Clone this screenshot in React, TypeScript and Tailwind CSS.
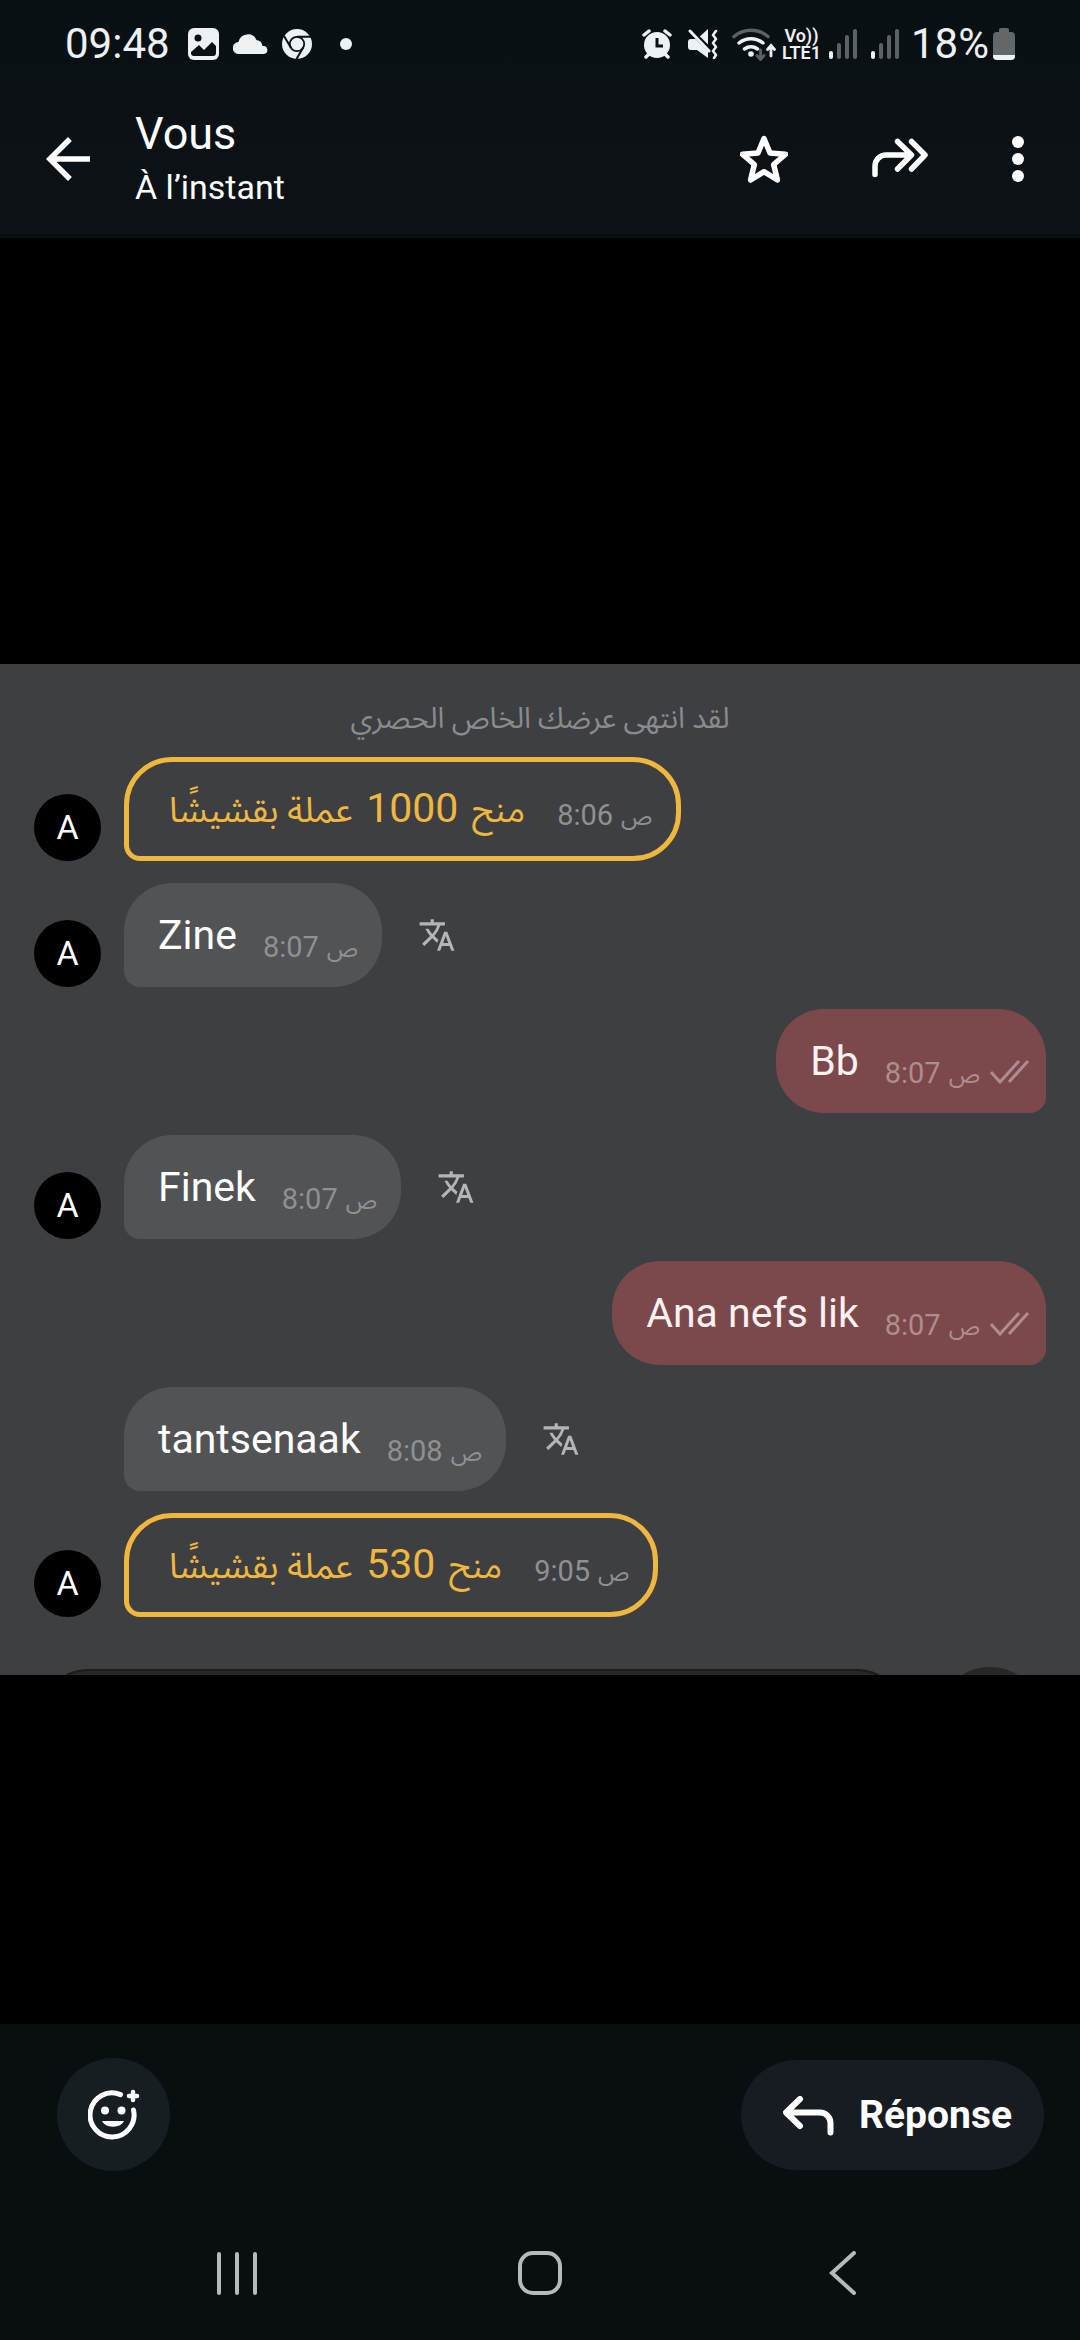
import { MdArrowBack, MdTranslate } from "react-icons/md";
import clsx from "clsx";

type Message = {
  id: number;
  kind: "tip" | "received" | "sent";
  text?: string;
  amount?: number;
  time: string;
  avatar?: boolean;
};

const messages: Message[] = [
  { id: 1, kind: "tip", amount: 1000, time: "8:06", avatar: true },
  { id: 2, kind: "received", text: "Zine", time: "8:07", avatar: true },
  { id: 3, kind: "sent", text: "Bb", time: "8:07" },
  { id: 4, kind: "received", text: "Finek", time: "8:07", avatar: true },
  { id: 5, kind: "sent", text: "Ana nefs lik", time: "8:07" },
  { id: 6, kind: "received", text: "tantsenaak", time: "8:08" },
  { id: 7, kind: "tip", amount: 530, time: "9:05", avatar: true },
];

function SignalBars() {
  return (
    <svg width="28" height="32" viewBox="0 0 28 32" strokeWidth="4" strokeLinecap="round">
      <path d="M2 25v4" stroke="#eef1f3" />
      <path d="M10 17v12M18 9v20M26 3v26" stroke="#5d6164" />
    </svg>
  );
}

function StatusBar() {
  return (
    <div className="flex h-[88px] items-center px-[65px] text-[#eef1f3]">
      <span className="text-[42px] leading-[48px]">09:48</span>
      <div className="ml-[18px] flex items-center gap-[14px]">
        <svg width="31" height="32" viewBox="0 0 31 32">
          <rect width="31" height="32" rx="6" fill="currentColor" />
          <circle cx="10" cy="10" r="3.5" fill="#0a1014" />
          <path d="M3 24l8-7 5 5 8-8 4 4v7a3 3 0 0 1-3 3H6a3 3 0 0 1-3-3z" fill="#0a1014" />
        </svg>
        <svg width="35" height="22" viewBox="0 0 35 22">
          <path
            d="M6 21a6 6 0 0 1-.5-12 9.500 9.500 0 0 1 18-2A7 7 0 0 1 29.500 13 4 4 0 0 1 31 21z"
            fill="currentColor"
          />
        </svg>
        <svg width="30" height="30" viewBox="0 0 30 30">
          <circle cx="15" cy="15" r="15" fill="currentColor" />
          <circle cx="15" cy="15" r="7.200" fill="none" stroke="#0a1014" strokeWidth="1.800" />
          <path
            d="M15 7.800H29M8.800 18.600L2 7M21.200 18.600L14.500 30"
            stroke="#0a1014"
            strokeWidth="2"
            fill="none"
          />
        </svg>
      </div>
      <span className="ml-7 size-3 rounded-full bg-current" />

      <div className="ml-auto flex items-center">
        <svg width="30" height="30" viewBox="0 0 30 30" fill="currentColor">
          <circle cx="15" cy="16" r="13" />
          <path
            d="M2 6l5-4M28 6l-5-4M7 25l-3 3M23 25l3 3"
            stroke="currentColor"
            strokeWidth="3.500"
            strokeLinecap="round"
          />
          <path d="M15 9v8h6" stroke="#0a1014" strokeWidth="3" fill="none" />
        </svg>
        <svg className="ml-4" width="30" height="30" viewBox="0 0 30 30" fill="currentColor">
          <path d="M0 13q0-3 3-3h6l11-10v29L9 21H3q-3 0-3-3z" />
          <path d="M3 2l19 19" stroke="#0a1014" strokeWidth="5" />
          <path d="M2 2l19 20" stroke="currentColor" strokeWidth="3" strokeLinecap="round" />
          <path
            d="M28 2l-3 4 3 4-3 4 3 4-3 4 3 4-2 3"
            fill="none"
            stroke="currentColor"
            strokeWidth="2.500"
            strokeLinecap="round"
            strokeLinejoin="round"
          />
        </svg>
        <svg className="ml-[14px]" width="44" height="34" viewBox="0 0 44 34" fill="none" strokeLinecap="round">
          <path d="M2 9.500a26 26 0 0 1 34 0" stroke="#5d6164" strokeWidth="3.500" />
          <path d="M7 16a19 19 0 0 1 24 0M12.500 22a11 11 0 0 1 13 0" stroke="#eef1f3" strokeWidth="3.500" />
          <circle cx="19" cy="27" r="2.800" fill="#eef1f3" />
          <path d="M28.500 23v9M25 28.500l3.500 4 3.500-4" stroke="#5d6164" strokeWidth="2.800" />
          <path d="M39 29v-10M35.500 22.500l3.500-4 3.500 4" stroke="#eef1f3" strokeWidth="2.800" />
        </svg>
        <div className="ml-[6px] flex flex-col items-center text-[18px] font-semibold leading-[17px]">
          <span>Vo))</span>
          <span>LTE1</span>
        </div>
        <div className="ml-2 flex gap-[14px]">
          <SignalBars />
          <SignalBars />
        </div>
        <span className="ml-3 text-[42px] leading-[48px]">18%</span>
        <svg className="ml-1" width="22" height="32" viewBox="0 0 22 32">
          <path
            d="M6 4V2q0-2 2-2h6q2 0 2 2v2h2q4 0 4 4v20q0 4-4 4H4q-4 0-4-4V8q0-4 4-4z"
            fill="#63676a"
          />
          <path d="M0 27h22v1q0 4-4 4H4q-4 0-4-4z" fill="#eef1f3" />
        </svg>
      </div>
    </div>
  );
}

function Topbar() {
  return (
    <header className="border-b-4 border-[#0a0f12] bg-linear-to-b from-[#091014] to-[#0d1216] pb-1">
      <StatusBar />
      <div className="flex h-[142px] items-center pl-[35px] pr-14 text-white">
        <button type="button" aria-label="Retour">
          <MdArrowBack className="size-[66px]" />
        </button>
        <div className="ml-[34px] pt-[2px]">
          <h1 className="text-[45px] leading-[54px]">Vous</h1>
          <p className="text-[34px] leading-[52px]">À l’instant</p>
        </div>
        <div className="ml-auto flex items-center gap-[84px]">
          <button type="button" aria-label="Favoris">
            <svg width="48" height="48" viewBox="0 0 48 48">
              <path
                d="M24 3.500l6 14.500 15.500 1.200-11.800 10.300 3.700 15.500L24 36.700 10.600 45l3.700-15.500L2.500 19.200 18 18z"
                fill="none"
                stroke="currentColor"
                strokeWidth="5.500"
                strokeLinejoin="round"
              />
            </svg>
          </button>
          <button type="button" aria-label="Transférer">
            <svg
              width="56"
              height="48"
              viewBox="0 0 56 48"
              fill="none"
              stroke="currentColor"
              strokeWidth="5.500"
              strokeLinecap="round"
              strokeLinejoin="round"
            >
              <path d="M3 39.500v-8.500a11 11 0 0 1 11-11h25M25.500 6.500L39.500 20 25.500 34M39.500 6.500L53 20 39.500 34" />
            </svg>
          </button>
          <button type="button" aria-label="Plus d’options">
            <svg width="12" height="48" viewBox="0 0 12 48" fill="currentColor">
              <circle cx="6" cy="7" r="6" />
              <circle cx="6" cy="24" r="6" />
              <circle cx="6" cy="41" r="6" />
            </svg>
          </button>
        </div>
      </div>
    </header>
  );
}

function MessageRow({ message }: { message: Message }) {
  const { kind, text, amount, time, avatar } = message;
  const sent = kind === "sent";
  const tip = kind === "tip";

  return (
    <li className={clsx("flex items-end", sent && "justify-end")}>
      {!sent && (
        <div
          className={clsx(
            "mr-[23px] flex size-[67px] items-center justify-center rounded-full text-[34px] text-white",
            avatar && "bg-black"
          )}
        >
          {avatar && "A"}
        </div>
      )}
      <div
        className={clsx(
          "flex h-[104px] items-center",
          tip && "gap-8 rounded-[48px] rounded-bl-2xl border-[5px] border-[#efb73e] pl-10 pr-6 text-[#efb73e]",
          kind === "received" && "gap-[26px] rounded-[48px] rounded-bl-2xl bg-[#525355] pl-[34px] pr-6 text-white",
          sent && "gap-[26px] rounded-[48px] rounded-br-2xl bg-[#7b494b] pl-[34px] pr-4 text-[#fdf1f1]"
        )}
      >
        {tip ? (
          <span dir="rtl" className="text-[35px] leading-[48px]">
            منح <span className="mx-[5px] text-[41px]">{amount}</span> عملة بقشيشًا
          </span>
        ) : (
          <span className="text-[41px] leading-[48px]">{text}</span>
        )}
        <span
          className={clsx(
            "flex items-center gap-[10px] text-[29px] leading-9",
            tip ? "pt-[14px]" : "pt-[26px]",
            sent ? "text-[#b08c8e]" : "text-[#8f9092]"
          )}
        >
          <span className="flex items-baseline gap-2">
            {time}
            <span className="text-2xl leading-9">ص</span>
          </span>
          {sent && (
            <svg
              className="mb-[5px]"
              width="40"
              height="24"
              viewBox="0 0 40 24"
              fill="none"
              stroke="currentColor"
              strokeWidth="3"
            >
              <path d="M1 12l9 10L29 1M19 22L38 1" />
            </svg>
          )}
        </span>
      </div>
      {kind === "received" && (
        <button type="button" aria-label="ترجمة" className="ml-9 self-center text-[#b4b5b6]">
          <MdTranslate className="size-[38px]" />
        </button>
      )}
    </li>
  );
}

function ChatCapture() {
  return (
    <section className="bg-[#3e3f42] pt-[34px]">
      <p dir="rtl" className="text-center text-[29px] leading-10 text-[#8a8b8d]">
        لقد انتهى عرضك الخاص الحصري
      </p>
      <ul className="mt-[19px] flex flex-col gap-[22px] px-[34px]">
        {messages.map((message) => (
          <MessageRow key={message.id} message={message} />
        ))}
      </ul>
      {/* composer, cut off by the bottom edge of the capture */}
      <div className="mt-[50px] flex h-2 items-start gap-7 overflow-hidden pl-9 pr-[37px]">
        <div className="mt-[2px] h-[106px] flex-1 rounded-full border-t-2 border-[#1b1c1e] bg-[#262729]" />
        <div className="size-[106px] rounded-full bg-[#262729]" />
      </div>
    </section>
  );
}

function BottomBar() {
  return (
    <footer className="bg-[#090e11]">
      <div className="flex items-center justify-between pl-[57px] pr-9 pt-[34px]">
        <button
          type="button"
          aria-label="Réagir"
          className="flex size-[113px] items-center justify-center rounded-full bg-[#171e21] text-white"
        >
          <svg width="52" height="52" viewBox="0 0 52 52" fill="none" stroke="currentColor" strokeLinecap="round">
            <path d="M32.500 5.600A22 22 0 1 0 45.500 21" strokeWidth="5" />
            <path d="M45 3v8M41 7h8" strokeWidth="4.500" />
            <circle cx="17" cy="21.500" r="4" fill="currentColor" stroke="none" />
            <circle cx="33.500" cy="21.500" r="4" fill="currentColor" stroke="none" />
            <path d="M14 32h22a11.500 8 0 0 1-22 0z" fill="currentColor" stroke="none" />
          </svg>
        </button>
        <button
          type="button"
          className="flex h-[110px] items-center gap-6 rounded-full bg-[#171c22] pl-[42px] pr-8 pt-[2px] text-[39px] font-bold text-white"
        >
          <svg
            width="52"
            height="40"
            viewBox="0 0 52 40"
            fill="none"
            stroke="currentColor"
            strokeWidth="6"
            strokeLinecap="round"
            strokeLinejoin="round"
          >
            <path d="M17 3L3 16.500 17 30M4 16.500h33a10.500 10.500 0 0 1 10.500 10.500v9.500" />
          </svg>
          Réponse
        </button>
      </div>
      <nav className="grid h-[169px] grid-cols-3 place-items-center px-[86px] pt-[34px] text-[#b7babc]">
        <button type="button" aria-label="Applications récentes">
          <svg width="44" height="44" viewBox="0 0 44 44" stroke="currentColor" strokeWidth="4" strokeLinecap="round">
            <path d="M4 3v39M22 3v39M40 3v39" />
          </svg>
        </button>
        <button type="button" aria-label="Accueil">
          <svg width="44" height="44" viewBox="0 0 44 44" fill="none" stroke="currentColor" strokeWidth="4">
            <rect x="2" y="2" width="40" height="40" rx="13" />
          </svg>
        </button>
        <button type="button" aria-label="Précédent">
          <svg
            width="44"
            height="44"
            viewBox="0 0 44 44"
            fill="none"
            stroke="currentColor"
            strokeWidth="4"
            strokeLinecap="round"
          >
            <path d="M33 2L11 22l22 20" />
          </svg>
        </button>
      </nav>
    </footer>
  );
}

export default function App() {
  return (
    <div className="flex min-h-screen flex-col bg-black font-[Roboto,'Noto_Sans_Arabic','Noto_Sans','DejaVu_Sans',sans-serif]">
      <Topbar />
      <main className="flex flex-1 flex-col justify-center pt-[77px]">
        <ChatCapture />
      </main>
      <BottomBar />
    </div>
  );
}
